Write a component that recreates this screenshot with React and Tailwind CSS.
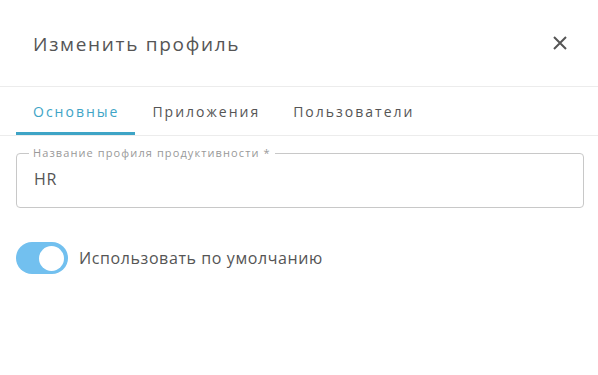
import React from 'react';

const tabs = ['Основные', 'Приложения', 'Пользователи'];

const App = () => {
  return (
    <div className="w-[598px] h-[375px] bg-white text-[#555] overflow-hidden" style={{ fontFamily: '"Open Sans", "Liberation Sans", sans-serif' }}>
      {/* Header */}
      <div className="h-[87px] flex items-center justify-between pl-[33px] pr-[31px] border-b border-[#ececec]">
        <h2 className="text-[19px] tracking-[1.7px] text-[#555] pt-[2px]">Изменить профиль</h2>
        <button className="w-[14px] h-[14px] text-[#555]">
          <svg viewBox="0 0 14 14" width="14" height="14" stroke="currentColor" strokeWidth="2" fill="none">
            <path d="M1 1 L13 13 M13 1 L1 13" />
          </svg>
        </button>
      </div>

      {/* Tabs */}
      <div className="flex pl-[16px] border-b border-[#ececec] h-[49px]">
        {tabs.map((t, i) => (
          <div
            key={t}
            className={`pl-[17px] pr-[16px] flex items-center text-[14px] tracking-[2px] ${
              i === 0 ? 'text-[#3ea4c6] border-b-[3px] border-[#3ea4c6] pt-[3px]' : 'text-[#555]'
            }`}
          >
            {t}
          </div>
        ))}
      </div>

      {/* Form */}
      <div className="pl-[16px] pr-[14px] pt-[11px]">
        <fieldset className="border border-[#c8c8c8] rounded-[4px] h-[61px] px-[12px]">
          <legend className="text-[11px] text-[#999] px-[4px] leading-[12px] tracking-[1.1px]">Название профиля продуктивности *</legend>
          <div className="pl-[5px] pt-[8px] text-[16px] text-[#555] tracking-[0.8px]">HR</div>
        </fieldset>

        <div className="flex items-center gap-[11px] mt-[34px]">
          <div className="w-[52px] h-[32px] rounded-full bg-[#72c0ef] flex items-center justify-end pr-[4px]">
            <div className="w-[25px] h-[25px] rounded-full bg-white" />
          </div>
          <span className="text-[16px] text-[#555] tracking-[0.6px]">Использовать по умолчанию</span>
        </div>
      </div>
    </div>
  );
};

export default App;
